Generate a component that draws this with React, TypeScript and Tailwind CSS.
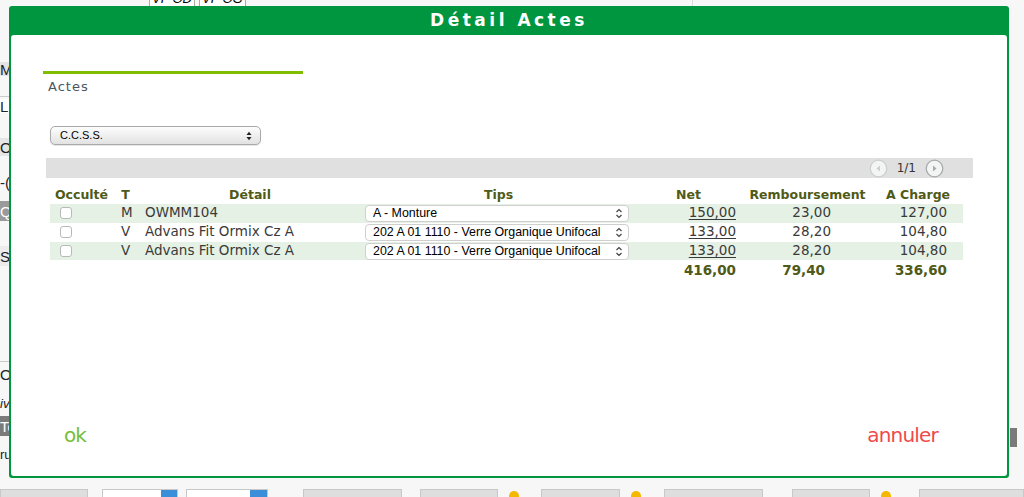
import React from 'react';

type Row = {
  t: string;
  detail: string;
  tips: string;
  net: string;
  remb: string;
  charge: string;
};

const rows: Row[] = [
  { t: 'M', detail: 'OWMM104', tips: 'A - Monture', net: '150,00', remb: '23,00', charge: '127,00' },
  { t: 'V', detail: 'Advans Fit Ormix Cz A', tips: '202 A 01 1110 - Verre Organique Unifocal', net: '133,00', remb: '28,20', charge: '104,80' },
  { t: 'V', detail: 'Advans Fit Ormix Cz A', tips: '202 A 01 1110 - Verre Organique Unifocal', net: '133,00', remb: '28,20', charge: '104,80' },
];

const cols = 'grid grid-cols-[63px_25px_224px_273px_107px_131px_90px]';

function Chevrons() {
  return (
    <svg width="8" height="11" viewBox="0 0 8 11" className="shrink-0">
      <path d="M1.5 4 L4 1.5 L6.5 4" fill="none" stroke="#444" strokeWidth="1.2" />
      <path d="M1.5 7 L4 9.5 L6.5 7" fill="none" stroke="#444" strokeWidth="1.2" />
    </svg>
  );
}

function PageArrow({ dir, light }: { dir: 'left' | 'right'; light?: boolean }) {
  const c = light ? '#c9d0d0' : '#a7abab';
  return (
    <svg width="19" height="19" viewBox="0 0 19 19">
      <circle cx="9.5" cy="9.5" r="8.3" fill="#f4f4f4" stroke={c} strokeWidth="1.3" />
      {dir === 'left' ? (
        <path d="M11 6.5 L7.5 9.5 L11 12.5 Z" fill={c} />
      ) : (
        <path d="M8 6.5 L11.5 9.5 L8 12.5 Z" fill={c} />
      )}
    </svg>
  );
}

function Background() {
  return (
    <div className="flex h-full w-full flex-col bg-[#f7f7f7]">
      {/* top strip */}
      <div className="flex h-[6px] items-end overflow-hidden">
        <div className="ml-[149px] flex h-[16px] items-center border-x border-[#aaa] bg-white px-[2px] font-['Liberation_Sans',sans-serif] text-[13px] italic leading-none text-black">VP OD</div>
        <div className="ml-[4px] flex h-[16px] items-center border-x border-[#aaa] bg-white px-[2px] font-['Liberation_Sans',sans-serif] text-[13px] italic leading-none text-black">VP OG</div>
        <div className="ml-[446px] h-full w-px bg-[#ddd]" />
      </div>
      <div className="flex flex-1">
        {/* left strip of the page behind */}
        <div className="flex w-[10px] flex-col overflow-hidden font-['Liberation_Sans',sans-serif] text-[15px] leading-none text-[#222]">
          <div className="mt-[56px] flex h-[14px] items-center bg-[#e4e4e4]">M</div>
          <div className="mt-[20px] h-px bg-[#ccc]" />
          <div className="mt-[2px] flex h-[14px] items-center bg-white">L</div>
          <div className="mt-[25px] flex h-[18px] items-center bg-[#e6e6e6]">O</div>
          <div className="mt-[20px] flex h-[12px] items-center">-(</div>
          <div className="mt-[13px] flex h-[20px] items-center bg-[#9a9a9a] text-white">Q</div>
          <div className="mt-[25px] flex h-[20px] items-center bg-[#ececec]">Sc</div>
          <div className="mt-[95px] h-px bg-[#ccc]" />
          <div className="mt-[4px] flex h-[16px] items-center">O</div>
          <div className="mt-[14px] flex h-[14px] items-center text-[13px] italic">iv</div>
          <div className="mt-[6px] flex h-[20px] items-center bg-[#7b7b7b] text-white">To</div>
          <div className="mt-[12px] flex h-[12px] items-center text-[13px]">ru</div>
        </div>
        <div className="flex-1" />
        <div className="flex w-[15px] flex-col">
          <div className="ml-[1px] mt-[422px] h-[19px] w-[7px] bg-[#7a7a7a]" />
        </div>
      </div>
      {/* bottom strip */}
      <div className="flex h-[8px] items-start overflow-visible">
        <div className="h-[10px] w-[88px] border border-[#c8c8c8] bg-[#dedede]" />
        <div className="ml-[14px] flex h-[10px] w-[76px] justify-end border border-[#c8c8c8] bg-white">
          <div className="h-full w-[16px] bg-[#3b8fd9]" />
        </div>
        <div className="ml-[8px] flex h-[10px] w-[82px] justify-end border border-[#c8c8c8] bg-white">
          <div className="h-full w-[17px] bg-[#3b8fd9]" />
        </div>
        <div className="ml-[35px] h-[10px] w-[99px] border border-[#c8c8c8] bg-[#dedede]" />
        <div className="ml-[18px] h-[10px] w-[78px] border border-[#c8c8c8] bg-[#dedede]" />
        <div className="ml-[11px] mt-[2px] h-[10px] w-[10px] rounded-full bg-[#f5b800]" />
        <div className="ml-[22px] h-[10px] w-[79px] border border-[#c8c8c8] bg-[#dedede]" />
        <div className="ml-[11px] mt-[2px] h-[10px] w-[10px] rounded-full bg-[#f5b800]" />
        <div className="ml-[23px] h-[10px] w-[99px] border border-[#c8c8c8] bg-[#dedede]" />
        <div className="ml-[29px] h-[10px] w-[78px] border border-[#c8c8c8] bg-[#dedede]" />
        <div className="ml-[11px] mt-[2px] h-[10px] w-[10px] rounded-full bg-[#f5b800]" />
        <div className="ml-[28px] h-[10px] flex-1 border border-[#c8c8c8] bg-[#dedede]" />
      </div>
    </div>
  );
}

export default function App() {
  return (
    <div className="relative h-[497px] w-[1024px] overflow-hidden font-['DejaVu_Sans',Verdana,sans-serif]">
      <Background />

      {/* Modal */}
      <div className="absolute left-[9px] top-[6px] flex h-[472px] w-[1000px] flex-col rounded-[3px] bg-[#009640] px-[2px] pb-[2px]">
        <div className="flex h-[29px] shrink-0 items-center justify-center">
          <h2 className="text-[17px] font-bold tracking-[3.5px] text-white">Détail Actes</h2>
        </div>
        <div className="flex flex-1 flex-col rounded-[3px] bg-white">
          {/* tab */}
          <div className="ml-[32px] mt-[36px] h-[3px] w-[260px] bg-[#80bc00]" />
          <div className="ml-[37px] mt-[5px] text-[13px] leading-[16px] tracking-[1px] text-[#4a5560]">Actes</div>

          {/* organisme select */}
          <div className="ml-[39px] mt-[31px] flex h-[19px] w-[211px] items-center justify-between rounded-[5px] border border-[#a9a9a9] bg-gradient-to-b from-[#fdfdfd] to-[#e2e2e2] pl-[9px] pr-[8px] font-['Liberation_Sans',sans-serif] text-[11px] text-black shadow-[0_1px_1px_rgba(0,0,0,0.1)]">
            <span>C.C.S.S.</span>
            <svg width="6" height="10" viewBox="0 0 6 10">
              <path d="M0.5 4 L3 0.8 L5.5 4 Z" fill="#222" />
              <path d="M0.5 6 L3 9.2 L5.5 6 Z" fill="#222" />
            </svg>
          </div>

          {/* pagination bar */}
          <div className="ml-[35px] mt-[13px] flex h-[20px] w-[927px] items-center justify-end bg-[#e0e0e0] pr-[29px]">
            <PageArrow dir="left" light />
            <span className="mx-[9px] text-[12px] text-[#333]">1/1</span>
            <PageArrow dir="right" />
          </div>

          {/* table */}
          <div className="ml-[39px] mt-[8px] w-[913px]">
            <div className={`${cols} h-[17px] items-center text-center text-[12.5px] font-bold text-[#4f5a17]`}>
              <div>Occulté</div>
              <div>T</div>
              <div>Détail</div>
              <div>Tips</div>
              <div>Net</div>
              <div>Remboursement</div>
              <div>A Charge</div>
            </div>
            <div className="mt-[1px]">
              {rows.map((r, i) => (
                <div
                  key={i}
                  className={`${cols} ${i === 1 ? 'h-[19px] bg-white' : 'h-[18.5px] bg-[#e4f1e4]'} items-start text-[13.5px] leading-[17px] text-[#3a3a3a]`}
                >
                  <div className="pl-[10px] pt-[3px]">
                    <div className="h-[12px] w-[12px] rounded-[3px] border border-[#b9b9b9] bg-white" />
                  </div>
                  <div className="pl-[8px]">{r.t}</div>
                  <div className="pl-[7px]">{r.detail}</div>
                  <div className="pl-[3px] pt-[1px]">
                    <div className="flex h-[17px] w-[264px] items-center justify-between rounded-[4px] border border-[#cfcfcf] bg-white pl-[7px] pr-[5px] font-['Liberation_Sans',sans-serif] text-[12.4px] text-black">
                      <span>{r.tips}</span>
                      <Chevrons />
                    </div>
                  </div>
                  <div className="pr-[6px] text-right underline underline-offset-2">{r.net}</div>
                  <div className="pr-[42px] text-right">{r.remb}</div>
                  <div className="pr-[16px] text-right">{r.charge}</div>
                </div>
              ))}
            </div>
            <div className={`${cols} h-[17px] items-center text-[13.5px] font-bold text-[#4f5a17]`}>
              <div />
              <div />
              <div />
              <div />
              <div className="pr-[6px] text-right">416,00</div>
              <div className="pr-[48px] text-right">79,40</div>
              <div className="pr-[16px] text-right">336,60</div>
            </div>
          </div>

          <div className="flex-1" />

          {/* footer actions */}
          <div className="mb-[31px] flex items-end justify-between pl-[53px] pr-[69px]">
            <button className="font-['DejaVu_Sans',sans-serif] text-[20px] leading-none tracking-[-1px] text-[#72bd3a]">ok</button>
            <button className="font-['DejaVu_Sans',sans-serif] text-[20px] leading-none tracking-[-0.8px] text-[#f04a4a]">annuler</button>
          </div>
        </div>
      </div>
    </div>
  );
}
